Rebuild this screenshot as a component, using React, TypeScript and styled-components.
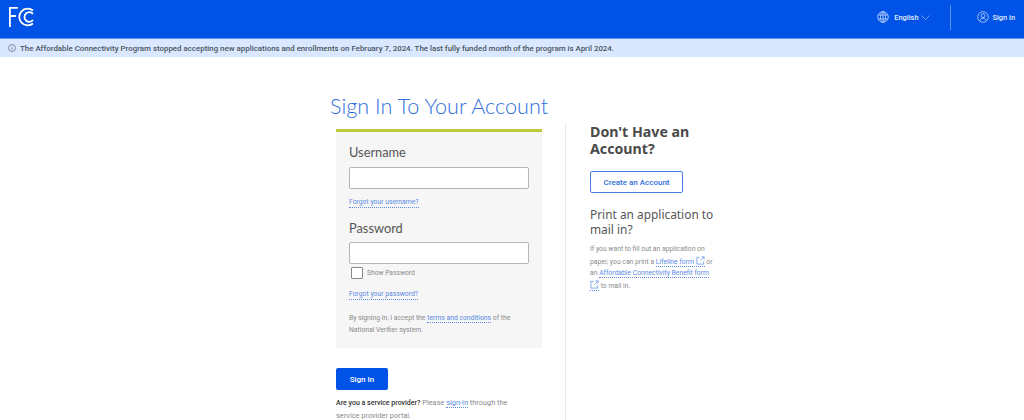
import styled, { createGlobalStyle } from "styled-components";

const GlobalStyle = createGlobalStyle`
  html, body {
    margin: 0;
    padding: 0;
    height: 420px;
    overflow: hidden;
    background: #fff;
    font-family: Roboto, "Noto Sans", sans-serif;
  }
`;

const Header = styled.header`
  height: 38px;
  background: #0053e6;
  display: flex;
  align-items: center;
  justify-content: space-between;
  padding: 0 9px 4px 9px;
  box-sizing: border-box;
  color: #fff;
`;

const HeaderRight = styled.div`
  display: flex;
  align-items: center;
`;

const HeaderItem = styled.span<{ $gap: number }>`
  display: flex;
  align-items: center;
  gap: ${(p) => p.$gap}px;
  font-size: 7.4px;
  font-weight: 500;
  color: #e4edff;
`;

const HeaderDivider = styled.span`
  width: 1px;
  height: 25px;
  background: #5c90ef;
  margin: 0 26px 0 20px;
`;

const Banner = styled.div`
  height: 19px;
  background: #d9e8fe;
  display: flex;
  align-items: center;
  gap: 4px;
  padding-left: 8px;
  font-size: 7.9px;
  font-weight: 500;
  color: #4a5560;
  border-top: 1px solid #5c93f0;
  box-sizing: border-box;
`;

const Main = styled.main`
  display: grid;
  grid-template-columns: 235px 174px;
  justify-content: start;
  padding: 35px 0 0 330px;
`;

const LeftColumn = styled.section`
  display: flex;
  flex-direction: column;
`;

const Title = styled.h1`
  margin: 0 0 9px;
  font: 300 21.6px/28px Lato, sans-serif;
  color: #2f6fdc;
  white-space: nowrap;
`;

const Card = styled.div`
  width: 206px;
  height: 219px;
  margin-left: 6px;
  box-sizing: border-box;
  background: #f6f6f6;
  border-top: 3px solid #bfc83a;
  padding: 10px 13px 0;
`;

const FieldLabel = styled.div<{ $top?: number }>`
  margin-top: ${(p) => p.$top ?? 0}px;
  font: 400 12.8px/20px Lato, sans-serif;
  color: #555;
`;

const Input = styled.div<{ $top: number }>`
  width: 180px;
  height: 22px;
  margin-top: ${(p) => p.$top}px;
  box-sizing: border-box;
  background: #fff;
  border: 1px solid #b5b5b5;
  border-radius: 2px;
`;

const SmallLink = styled.a<{ $top?: number }>`
  display: inline-block;
  margin-top: ${(p) => p.$top ?? 0}px;
  font-size: 6.8px;
  line-height: 9px;
  color: #5a8ae3;
  border-bottom: 1px dotted #5a8ae3;
`;

const CheckRow = styled.div`
  display: flex;
  align-items: center;
  gap: 4px;
  margin: 3px 0 0 2px;
  font-size: 6.7px;
  color: #8a8a8a;
`;

const CheckBox = styled.span`
  width: 10px;
  height: 10px;
  background: #fff;
  border: 1px solid #888;
  border-radius: 1px;
`;

const Muted = styled.p`
  margin: 0;
  font-size: 6.8px;
  line-height: 11.5px;
  color: #8a8a8a;
`;

const Terms = styled(Muted)`
  margin-top: 13px;
`;

const InlineLink = styled.span`
  color: #5a8ae3;
  border-bottom: 1px dotted #5a8ae3;
`;

const SignInButton = styled.button`
  width: 52px;
  height: 22px;
  margin: 20px 0 0 6px;
  padding: 0;
  background: #0053e6;
  border: 0;
  border-radius: 2px;
  color: #fff;
  font: 500 8px Roboto, sans-serif;
`;

const Provider = styled(Muted)`
  width: 190px;
  margin: 7px 0 0 6px;
  font-size: 7.4px;
  b {
    color: #333;
    font-size: 7px;
    font-weight: 500;
  }
`;

const RightColumn = styled.aside`
  height: 297px;
  margin-top: 31px;
  box-sizing: border-box;
  border-left: 1px solid #e9e9e9;
  padding: 0 0 0 24px;
`;

const Heading = styled.h2`
  margin: 0;
  font: 700 14.2px/17px "Noto Sans", sans-serif;
  color: #4a4a4a;
`;

const OutlineButton = styled.button`
  display: block;
  width: 93px;
  height: 22px;
  margin-top: 14px;
  padding: 0;
  background: #fff;
  border: 1px solid #4a7fdf;
  border-radius: 2px;
  color: #2f6fdc;
  font: 500 8px Roboto, sans-serif;
`;

const SubHeading = styled.h3`
  margin: 14px 0 7px;
  font: 400 11.9px/15px "Noto Sans", sans-serif;
  color: #555;
`;

const Para = styled(Muted)`
  width: 128px;
`;

const ExternalIcon = () => (
  <svg width="9" height="9" viewBox="0 0 10 10" fill="none" stroke="#5a8ae3" strokeWidth="0.8" style={{ verticalAlign: -1 }}>
    <path d="M4 1.500H1v7.500h7.500V6M5 5l4-4M6.200 1H9v2.800" />
  </svg>
);

const App = () => (
  <>
    <GlobalStyle />
    <Header>
      <svg width="25" height="20" viewBox="0 0 25 20" fill="none" stroke="#fff" strokeWidth="1.8">
        <path d="M.9 20V.9h8M.9 9h6" />
        <path d="M24 3.500A8.400 8.400 0 1 0 24 16.500" />
        <path d="M24 7A4.800 4.800 0 1 0 24 13" />
      </svg>
      <HeaderRight>
        <HeaderItem $gap={5}>
          <svg width="12" height="12" viewBox="0 0 12 12" fill="none" stroke="#dbe6ff" strokeWidth="0.7">
            <circle cx="6" cy="6" r="5.300" />
            <ellipse cx="6" cy="6" rx="2.500" ry="5.300" />
            <path d="M1 4h10M1 8h10M6 .7v10.600" />
          </svg>
          English
          <svg width="9" height="5" viewBox="0 0 9 5" fill="none" stroke="#9dbdf7" strokeWidth="0.7" style={{ marginLeft: -3 }}>
            <path d="M.5.500 4.500 4.500 8.500.5" />
          </svg>
        </HeaderItem>
        <HeaderDivider />
        <HeaderItem $gap={4}>
          <svg width="12" height="12" viewBox="0 0 12 12" fill="none" stroke="#dbe6ff" strokeWidth="0.7">
            <circle cx="6" cy="6" r="5.300" />
            <circle cx="6" cy="4.600" r="2" />
            <path d="M2.500 10c.8-2 2-2.800 3.500-2.800S8.700 8 9.500 10" />
          </svg>
          Sign in
        </HeaderItem>
      </HeaderRight>
    </Header>
    <Banner>
      <svg width="8" height="8" viewBox="0 0 8 8" fill="none" stroke="#4a5560" strokeWidth="0.6">
        <circle cx="4" cy="4" r="3.500" />
        <path d="M4 3.400V6M4 2v.7" />
      </svg>
      The Affordable Connectivity Program stopped accepting new applications and enrollments on February 7, 2024. The last fully funded month of the program is April 2024.
    </Banner>
    <Main>
      <LeftColumn>
        <Title>Sign In To Your Account</Title>
        <Card>
          <FieldLabel>Username</FieldLabel>
          <Input $top={5} />
          <SmallLink $top={7}>Forgot your username?</SmallLink>
          <FieldLabel $top={10}>Password</FieldLabel>
          <Input $top={4} />
          <CheckRow>
            <CheckBox />
            Show Password
          </CheckRow>
          <SmallLink $top={11}>Forgot your password?</SmallLink>
          <Terms>
            By signing in, I accept the <InlineLink>terms and conditions</InlineLink> of the National Verifier system.
          </Terms>
        </Card>
        <SignInButton>Sign In</SignInButton>
        <Provider>
          <b>Are you a service provider?</b> Please <InlineLink>sign-in</InlineLink> through the service provider portal.
        </Provider>
      </LeftColumn>
      <RightColumn>
        <Heading>Don't Have an Account?</Heading>
        <OutlineButton>Create an Account</OutlineButton>
        <SubHeading>Print an application to mail in?</SubHeading>
        <Para>
          If you want to fill out an application on paper, you can print a <InlineLink>Lifeline form <ExternalIcon /></InlineLink> or an{" "}
          <InlineLink>Affordable Connectivity Benefit form</InlineLink> <InlineLink><ExternalIcon /></InlineLink> to mail in.
        </Para>
      </RightColumn>
    </Main>
  </>
);

export default App;
